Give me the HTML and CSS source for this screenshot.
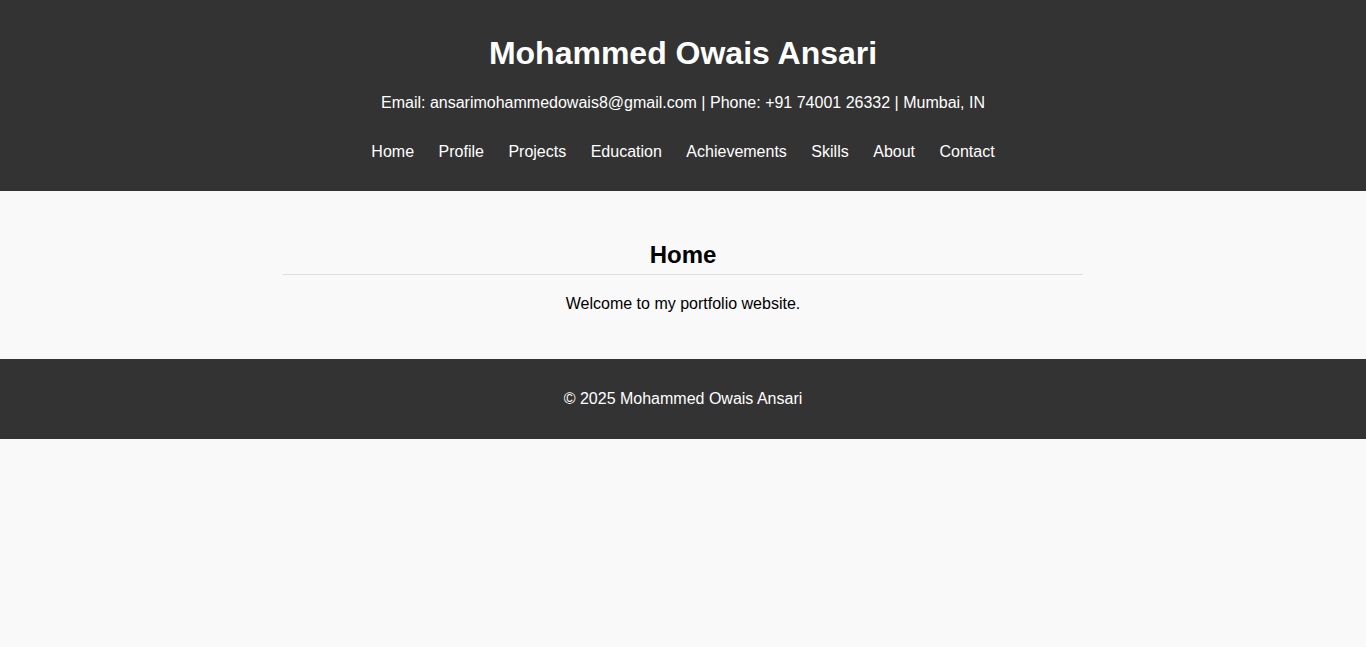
FILE: index.html
```html
<!DOCTYPE html>
<html lang="en">
<head>
<meta charset="utf-8">
<title>Mohammed Owais Ansari</title>
<link rel="stylesheet" href="styles.css">
</head>
<body>
<header class="site-header">
  <h1 class="site-title">Mohammed Owais Ansari</h1>
  <p class="contact-line">Email: ansarimohammedowais8@gmail.com | Phone: +91 74001 26332 | Mumbai, IN</p>
  <nav class="site-nav">
    <a href="#home">Home</a>
    <a href="#profile">Profile</a>
    <a href="#projects">Projects</a>
    <a href="#education">Education</a>
    <a href="#achievements">Achievements</a>
    <a href="#skills">Skills</a>
    <a href="#about">About</a>
    <a href="#contact">Contact</a>
  </nav>
</header>
<main class="content">
  <section class="panel" id="home">
    <h2 class="panel-title">Home</h2>
    <p class="panel-text">Welcome to my portfolio website.</p>
  </section>
</main>
<footer class="site-footer">
  <p class="footer-text">© 2025 Mohammed Owais Ansari</p>
</footer>
</body>
</html>
```
FILE: styles.css
```css
html, body {
  margin: 0;
  padding: 0;
}
body {
  background: #f9f9f9;
  font-family: "Liberation Sans", Arial, sans-serif;
  font-size: 16px;
  color: #000;
}
.site-header {
  background: #333;
  color: #fff;
  text-align: center;
  padding: 35px 0 29.6px;
}
.site-title {
  margin: 0;
  font-size: 32px;
  font-weight: bold;
}
.contact-line {
  margin: 22px 0 31px;
}
.site-nav {
  display: flex;
  justify-content: center;
  gap: 24.5px;
}
.site-nav a {
  color: #fff;
  text-decoration: none;
}
.content {
  padding: 29px 20px 30px;
}
.panel {
  max-width: 800px;
  margin: 0 auto;
  text-align: center;
}
.panel-title {
  margin: 21px 0 20px;
  font-size: 24px;
  padding-bottom: 5px;
  border-bottom: 1px solid #ddd;
}
.panel-text {
  margin: 0 0 16px;
}
.site-footer {
  background: #333;
  color: #fff;
  text-align: center;
  height: 80px;
  display: flex;
  align-items: center;
  justify-content: center;
}
.footer-text {
  margin: 0;
}
```
